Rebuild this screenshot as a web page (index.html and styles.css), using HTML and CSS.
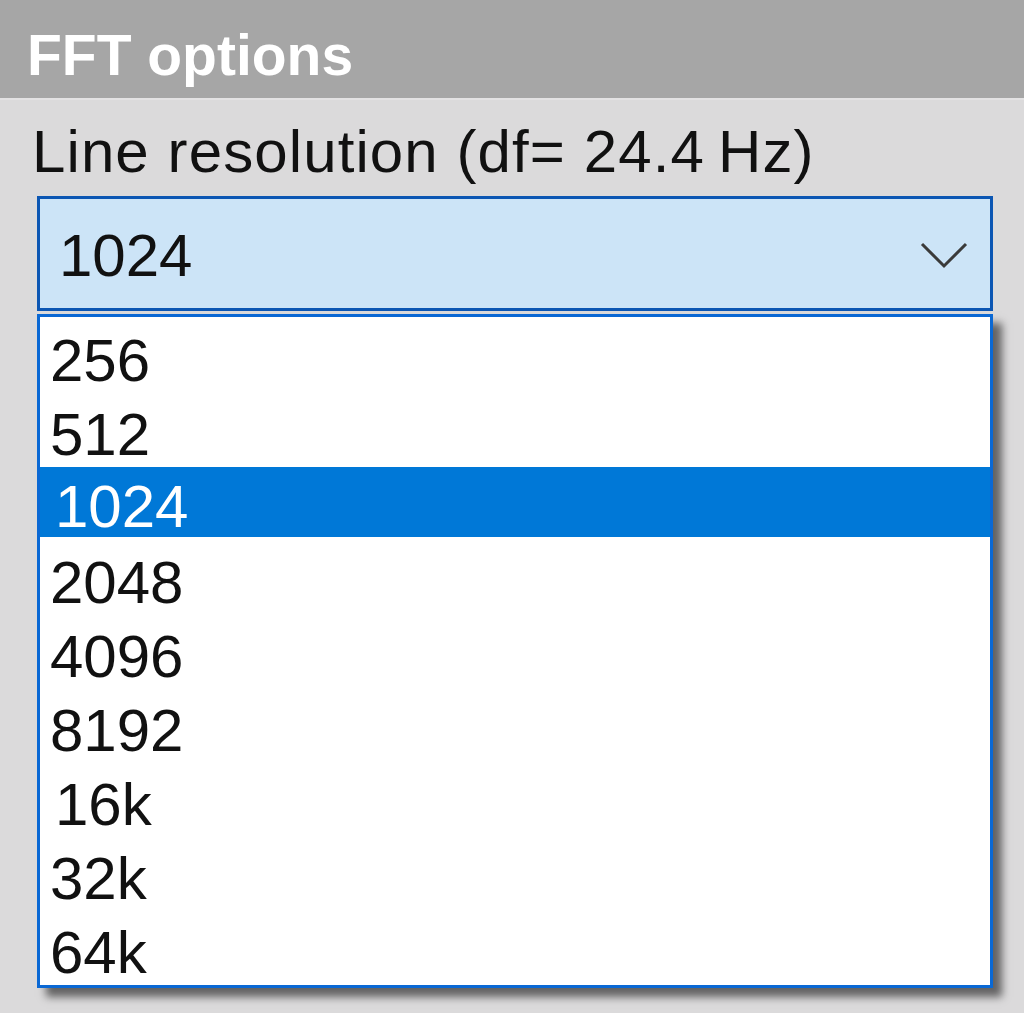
FILE: index.html
```html
<!DOCTYPE html>
<html>
<head>
<meta charset="utf-8">
<link rel="stylesheet" href="styles.css">
</head>
<body>
<div class="panel">
  <div class="header">FFT options</div>
  <div class="content">
    <div class="label">Line resolution (df= 24.4&#8201;Hz)</div>
    <div class="combo">
      <span class="combo-value">1024</span>
      <svg class="chevron" width="48" height="28" viewBox="0 0 48 28"><polyline points="2,3 24,25 46,3" fill="none" stroke="#3a3a3a" stroke-width="3"/></svg>
    </div>
    <ul class="list">
      <li class="item">256</li>
      <li class="item">512</li>
      <li class="item selected lead-one">1024</li>
      <li class="item">2048</li>
      <li class="item">4096</li>
      <li class="item">8192</li>
      <li class="item lead-one">16k</li>
      <li class="item">32k</li>
      <li class="item">64k</li>
    </ul>
  </div>
</div>
</body>
</html>
```

FILE: styles.css
```css
html, body {
  margin: 0;
  padding: 0;
  background: #dbdadb;
}
body {
  width: 1024px;
  height: 1013px;
  overflow: hidden;
  font-family: "Liberation Sans", Arial, sans-serif;
}
.panel {
  display: flex;
  flex-direction: column;
}
.header {
  height: 100px;
  box-sizing: border-box;
  background: #a6a6a6;
  color: #ffffff;
  font-weight: bold;
  font-size: 57px;
  line-height: 57px;
  padding: 27px 0 0 27px;
  border-bottom: 2px solid #e3e2e3;
}
.content {
  padding: 22px 31px 0 37px;
  display: flex;
  flex-direction: column;
}
.label {
  font-size: 60px;
  line-height: 60px;
  letter-spacing: 1.1px;
  color: #111;
  margin-left: -5px;
  height: 74px;
}
.combo {
  height: 115px;
  box-sizing: border-box;
  border: 3px solid #0b56b3;
  background: #cce4f7;
  display: flex;
  align-items: center;
  justify-content: space-between;
  padding: 10px 22px 0 19px;
  font-size: 60px;
  color: #111;
}
.combo-value {
  line-height: 60px;
  margin-top: -6px;
}
.chevron {
  display: block;
  margin-top: -8px;
}
.list {
  list-style: none;
  margin: 3px 0 0 0;
  padding: 0;
  height: 674px;
  box-sizing: border-box;
  border: 3px solid #0a68d4;
  background: #ffffff;
  box-shadow: 9px 9px 8px rgba(0, 0, 0, 0.55);
  display: flex;
  flex-direction: column;
}
.item {
  height: 74px;
  box-sizing: border-box;
  padding: 14px 0 0 10px;
  font-size: 60px;
  line-height: 60px;
  color: #111;
}
.item.lead-one {
  padding-left: 15px;
}
.item.selected {
  background: #0078d7;
  color: #ffffff;
  height: 70px;
  margin: 2px 0;
  padding-top: 10px;
}
```
